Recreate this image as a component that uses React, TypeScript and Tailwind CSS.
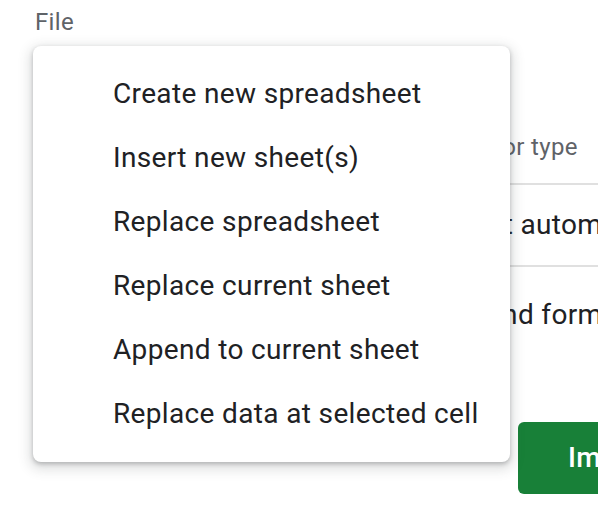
import React from 'react';

const menuItems = [
  'Create new spreadsheet',
  'Insert new sheet(s)',
  'Replace spreadsheet',
  'Replace current sheet',
  'Append to current sheet',
  'Replace data at selected cell',
];

export default function App() {
  return (
    <div className="relative w-[598px] h-[506px] overflow-hidden bg-white font-['Roboto','Liberation_Sans',sans-serif] tracking-[0.35px]">
      {/* dialog content underneath the menu */}
      <div className="pl-[35px] pt-[8px]">
        <div className="text-[24px] leading-[28px] text-[#5f6368]">File</div>

        <div className="grid grid-cols-[383px_1fr] mt-[97px]">
          <div>
            <div className="text-[24px] leading-[28px] text-[#5f6368] whitespace-nowrap">Import location</div>
            <div className="mt-[23px] h-[81px] flex items-center text-[28px] leading-[32px] text-[#202124]">
              New spreadsheet
            </div>
          </div>
          <div className="min-w-0">
            <div className="border-b-2 border-[#e0e0e0] pb-[22px] text-[24px] leading-[28px] text-[#5f6368] whitespace-nowrap">
              Separator type
            </div>
            <div className="border-b-2 border-[#e0e0e0] h-[82px] pl-3 flex items-center text-[28px] leading-[32px] text-[#202124] whitespace-nowrap">
              Detect automatically
            </div>
          </div>
        </div>

        <div className="flex items-center gap-[42px] mt-[30px]">
          <div className="w-9 h-9 rounded border-2 border-[#5f6368]" />
          <span className="text-[28px] leading-[32px] text-[#202124] whitespace-nowrap">
            Convert text to numbers, dates, and formulas
          </span>
        </div>

        <div className="flex mt-[89px] ml-[483px]">
          <button className="h-[72px] px-[50px] rounded-[6px] bg-[#188038] text-white text-[28px] font-medium flex items-center whitespace-nowrap">
            Import data
          </button>
        </div>
      </div>

      {/* dropdown menu */}
      <div className="absolute left-[33px] top-[46px] w-[477px] py-4 rounded-lg bg-white shadow-[0_2px_4px_rgba(60,64,67,0.3),0_4px_12px_4px_rgba(60,64,67,0.15)]">
        {menuItems.map((item) => (
          <div key={item} className="h-16 pl-[80px] flex items-center text-[28px] text-[#202124] whitespace-nowrap">
            {item}
          </div>
        ))}
      </div>
    </div>
  );
}
